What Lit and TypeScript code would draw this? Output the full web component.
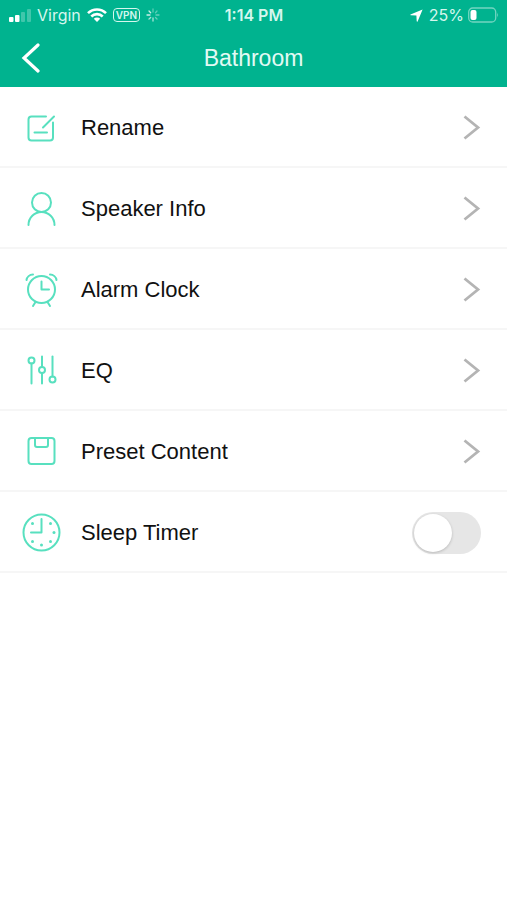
import { LitElement, html, css, svg } from "lit";
import { customElement, property } from "lit/decorators.js";

const icons = {
  rename: svg`
    <path d="M25 8.500H10.500A3 3 0 0 0 7.500 11.500V29.500A3 3 0 0 0 10.500 32.500H29A3 3 0 0 0 32 29.500V14.500"/>
    <path d="M22 19.500L33 8.500M13.500 24.500H26"/>`,
  person: svg`
    <circle cx="20.500" cy="13.500" r="9.500"/>
    <path d="M7.500 36A13 13 0 0 1 33.500 36"/>`,
  alarm: svg`
    <circle cx="20.500" cy="19.500" r="13.500"/>
    <path d="M20.500 11.500V19.500H28"/>
    <path d="M5.500 10C6 7 8.500 4.500 12 4.500M35.500 10C35 7 32.500 4.500 29 4.500"/>
    <path d="M14.500 32L12 36M26.500 32L29 36"/>`,
  eq: svg`
    <circle cx="10.500" cy="9.500" r="3"/><path d="M10.500 12.500V32.500"/>
    <circle cx="21" cy="19" r="3"/><path d="M21 5.500V16M21 22V32.500"/>
    <circle cx="31.500" cy="28.500" r="3"/><path d="M31.500 5.500V25.500"/>`,
  disk: svg`
    <rect x="7.500" y="6" width="26" height="26" rx="3"/>
    <path d="M14 6V13A2 2 0 0 0 16 15H25A2 2 0 0 0 27 13V6"/>`,
  clock: svg`
    <circle cx="20.500" cy="19.500" r="18"/>
    <path d="M20.500 6V19.500H10"/>
    <g fill="currentColor" stroke="none">
      <circle cx="33" cy="19.500" r="1.500"/><circle cx="20.500" cy="32" r="1.500"/>
      <circle cx="11.500" cy="10.500" r="1.500"/><circle cx="29.500" cy="10.500" r="1.500"/>
      <circle cx="29.500" cy="28.500" r="1.500"/><circle cx="11.500" cy="28.500" r="1.500"/>
    </g>`,
};

type IconName = keyof typeof icons;

@customElement("line-icon")
export class LineIcon extends LitElement {
  @property() name: IconName = "rename";

  static styles = css`
    :host { display: block; flex: none; color: #58e0bf; }
    .icon {
      display: block; width: 40px; height: 40px; fill: none;
      stroke: currentColor; stroke-width: 2; stroke-linecap: round; stroke-linejoin: round;
    }
  `;

  render() {
    return html`<svg class="icon" viewBox="0 0 40 40" aria-hidden="true">${icons[this.name]}</svg>`;
  }
}

@customElement("status-bar")
export class StatusBar extends LitElement {
  static styles = css`
    :host {
      display: grid; grid-template-columns: 1fr auto 1fr; align-items: center;
      height: 30px; padding: 0 8px 0 9px; color: #d5f7ee;
      font: 16px/20px Inter, "Liberation Sans", sans-serif;
    }
    svg { display: block; flex: none; }
    .side { display: flex; align-items: center; gap: 6px; }
    .end { justify-content: flex-end; }
    .battery { gap: 4px; display: flex; align-items: center; }
    .time { font-weight: 600; }
    .vpn {
      border: 1px solid currentColor; border-radius: 4px; padding: 0 2px;
      font-size: 10px; line-height: 12px; font-weight: 600;
    }
  `;

  render() {
    return html`
      <div class="side">
        <svg width="22" height="14" viewBox="0 0 22 14" fill="#fff" aria-hidden="true">
          <rect y="9" width="4.500" height="5" rx="1"/>
          <rect x="6" y="7" width="4.500" height="7" rx="1"/>
          <rect x="12" y="4" width="4" height="10" rx="1" opacity=".25"/>
          <rect x="18" y="1" width="4" height="13" rx="1" opacity=".25"/>
        </svg>
        <span>Virgin</span>
        <svg width="20" height="14" viewBox="0 0 20 14" aria-hidden="true">
          <g fill="none" stroke="#fff" stroke-width="2.600">
            <path d="M1 5.200A12.700 12.700 0 0 1 19 5.200"/>
            <path d="M4.300 8.500A8 8 0 0 1 15.700 8.500"/>
          </g>
          <path d="M10 14L6.800 10.800A4.500 4.500 0 0 1 13.200 10.800Z" fill="#fff"/>
        </svg>
        <span class="vpn">VPN</span>
        <svg width="14" height="14" viewBox="0 0 14 14" stroke="#fff" stroke-width="1.300" stroke-linecap="round" aria-hidden="true">
          <path d="M1 7H4M3 3L4.700 4.700" opacity=".8"/>
          <path d="M7 1V4M11 3L9.500 4.700" opacity=".35"/>
          <path d="M10 7H13M9.500 9.500L11 11" opacity=".4"/>
          <path d="M7 10V13M4.700 9.500L3 11" opacity=".65"/>
        </svg>
      </div>
      <span class="time">1:14 PM</span>
      <div class="side end">
        <svg width="13" height="13" viewBox="0 0 13 13" fill="#fff" aria-hidden="true">
          <path d="M12.600 .4L7.600 12.500Q7 13 6.700 12.200L6.400 6.600L.8 6.300Q0 6 .5 5.400Z"/>
        </svg>
        <div class="battery">
          <span>25%</span>
          <svg width="31" height="16" viewBox="0 0 31 16" aria-hidden="true">
            <rect x=".7" y="1" width="27" height="14" rx="4" fill="none" stroke="#fff" stroke-opacity=".45" stroke-width="1.300"/>
            <path d="M29.300 5.500Q31 8 29.300 10.500Z" fill="#fff" fill-opacity=".5"/>
            <rect x="2.500" y="3" width="6" height="10" rx="2" fill="#fff"/>
          </svg>
        </div>
      </div>
    `;
  }
}

const links: { icon: IconName; label: string }[] = [
  { icon: "rename", label: "Rename" },
  { icon: "person", label: "Speaker Info" },
  { icon: "alarm", label: "Alarm Clock" },
  { icon: "eq", label: "EQ" },
  { icon: "disk", label: "Preset Content" },
];

@customElement("app-root")
export class AppRoot extends LitElement {
  static styles = css`
    :host {
      display: block; min-height: 100vh; background: #fff; color: #111;
      font: 22px/28px "Liberation Sans", Arial, sans-serif;
    }
    .header { background: #00b38f; }
    .bar {
      display: grid; grid-template-columns: 40px 1fr 40px; align-items: center;
      height: 57px; padding: 0 11px 2px; box-sizing: border-box;
    }
    .back {
      display: grid; place-items: center; width: 40px; height: 40px;
      padding: 0; border: 0; background: none; cursor: pointer;
    }
    .title {
      margin: 0; text-align: center; color: #e2faf4;
      font-size: 23px; line-height: 28px; font-weight: 400;
    }
    .list { margin: 0; padding: 0; list-style: none; }
    .row {
      display: flex; align-items: center; gap: 20px; box-sizing: border-box;
      width: 100%; height: 81px; padding: 3px 26px 0 21px;
      border: 0; border-bottom: 2px solid #f6f6f6; background: none;
      color: inherit; font: inherit; text-align: left; cursor: pointer;
    }
    .label { flex: 1; }
    .chevron { display: block; flex: none; }
    .switch {
      appearance: none; flex: none; display: flex; align-items: center;
      width: 69px; height: 42px; margin: 0; padding: 2px; box-sizing: border-box;
      border-radius: 21px; background: #e6e6e6; cursor: pointer;
    }
    .switch::before {
      content: ""; width: 38px; height: 38px; border-radius: 50%;
      background: #fff; box-shadow: 0 1px 3px #0003;
    }
    .switch:checked { background: #00b38f; justify-content: flex-end; }
  `;

  render() {
    return html`
      <header class="header">
        <status-bar></status-bar>
        <div class="bar">
          <button class="back" aria-label="Back">
            <svg width="20" height="30" viewBox="0 0 20 30" fill="none" stroke="#fff" stroke-width="3.200" stroke-linecap="round" aria-hidden="true">
              <path d="M17 2L3 15L17 28"/>
            </svg>
          </button>
          <h1 class="title">Bathroom</h1>
        </div>
      </header>
      <main>
        <ul class="list">
          ${links.map(
            ({ icon, label }) => html`
              <li>
                <button class="row">
                  <line-icon name=${icon}></line-icon>
                  <span class="label">${label}</span>
                  <svg class="chevron" width="18" height="26" viewBox="0 0 18 26" fill="none" stroke="#b4b4b4" stroke-width="2.800" aria-hidden="true">
                    <path d="M1.500 1.500L15 12.500L1.500 23.500"/>
                  </svg>
                </button>
              </li>
            `,
          )}
          <li>
            <label class="row">
              <line-icon name="clock"></line-icon>
              <span class="label">Sleep Timer</span>
              <input class="switch" type="checkbox" role="switch" />
            </label>
          </li>
        </ul>
      </main>
    `;
  }
}
